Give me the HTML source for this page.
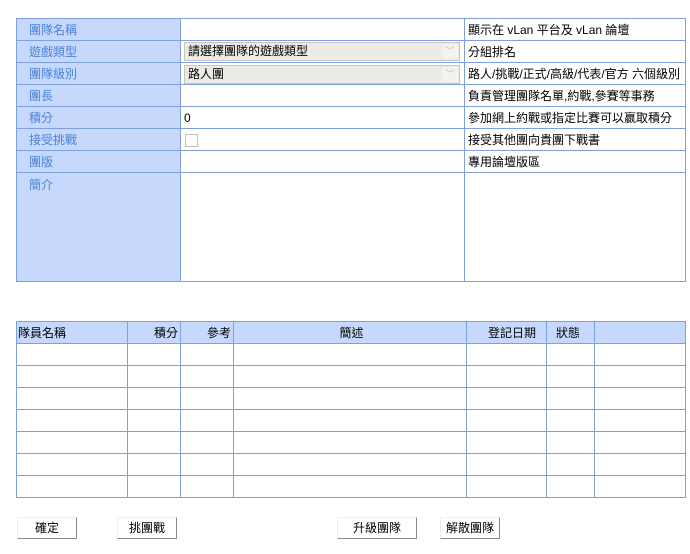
<!DOCTYPE html>
<html><head><meta charset="utf-8"><style>
body{margin:0;background:#fff;font-family:"Liberation Sans","Noto Sans CJK TC",sans-serif;font-size:12px;color:#000;}
.a{position:absolute;box-sizing:border-box;}
table{position:absolute;border-collapse:collapse;table-layout:fixed;}
td{border:1px solid #7fa0e0;padding:0 0 0 3px;height:21px;font-size:12px;white-space:nowrap;overflow:hidden;}
td.l{background:#c6d9fc;color:#4b82d8;padding-left:12px;}
td.h{background:#c6d9fc;}
.sel{position:absolute;background:#ecebe6;border:1px solid #c9c7bd;height:19px;box-sizing:border-box;padding-left:3px;line-height:17px;color:#000;}
.arr{position:absolute;right:1px;top:1px;width:16px;height:15px;background:#f3f2ee;color:#bbb;font-size:9px;text-align:center;line-height:15px}
.btn{position:absolute;height:22px;border:1px solid #888;border-top-color:#eee;border-left-color:#eee;box-sizing:border-box;text-align:center;line-height:20px;background:#fff;font-size:12px;}
</style></head><body>
<table style="left:16px;top:18px;width:669px">
<colgroup><col style="width:164px"><col style="width:284px"><col style="width:221px"></colgroup>
<tr><td class="l">團隊名稱</td><td></td><td>顯示在 vLan 平台及 vLan 論壇</td></tr>
<tr><td class="l">遊戲類型</td><td></td><td>分組排名</td></tr>
<tr><td class="l">團隊級別</td><td></td><td>路人/挑戰/正式/高級/代表/官方 六個級別</td></tr>
<tr><td class="l">團長</td><td></td><td>負責管理團隊名單,約戰,參賽等事務</td></tr>
<tr><td class="l">積分</td><td>0</td><td>參加網上約戰或指定比賽可以贏取積分</td></tr>
<tr><td class="l">接受挑戰</td><td></td><td>接受其他團向貴團下戰書</td></tr>
<tr><td class="l">團版</td><td></td><td>專用論壇版區</td></tr>
<tr><td class="l" style="height:105px;vertical-align:top;padding-top:3px">簡介</td><td></td><td></td></tr>
</table>
<div class="sel" style="left:184px;top:42px;width:276px">請選擇團隊的遊戲類型<div class="arr">﹀</div></div>
<div class="sel" style="left:184px;top:65px;width:276px">路人團<div class="arr">﹀</div></div>
<div class="a" style="left:185px;top:134px;width:13px;height:13px;border:1px solid #c0c0c0;background:#fff"></div>
<table style="left:16px;top:321px;width:669px">
<colgroup><col style="width:111px"><col style="width:53px"><col style="width:53px"><col style="width:233px"><col style="width:80px"><col style="width:48px"><col style="width:91px"></colgroup>
<tr><td class="h" style="padding-left:1px">隊員名稱</td><td class="h" style="text-align:right;padding-right:2px">積分</td><td class="h" style="text-align:right;padding-right:2px">參考</td><td class="h" style="text-align:center">簡述</td><td class="h" style="text-align:right;padding-right:10px">登記日期</td><td class="h" style="text-align:right;padding-right:14px">狀態</td><td class="h"></td></tr>
<tr><td></td><td></td><td></td><td></td><td></td><td></td><td></td></tr>
<tr><td></td><td></td><td></td><td></td><td></td><td></td><td></td></tr>
<tr><td></td><td></td><td></td><td></td><td></td><td></td><td></td></tr>
<tr><td></td><td></td><td></td><td></td><td></td><td></td><td></td></tr>
<tr><td></td><td></td><td></td><td></td><td></td><td></td><td></td></tr>
<tr><td></td><td></td><td></td><td></td><td></td><td></td><td></td></tr>
<tr><td></td><td></td><td></td><td></td><td></td><td></td><td></td></tr>
</table>
<div class="btn" style="left:17px;top:517px;width:60px">確定</div>
<div class="btn" style="left:117px;top:517px;width:60px">挑團戰</div>
<div class="btn" style="left:337px;top:517px;width:80px">升級團隊</div>
<div class="btn" style="left:440px;top:517px;width:60px">解散團隊</div>
</body></html>
